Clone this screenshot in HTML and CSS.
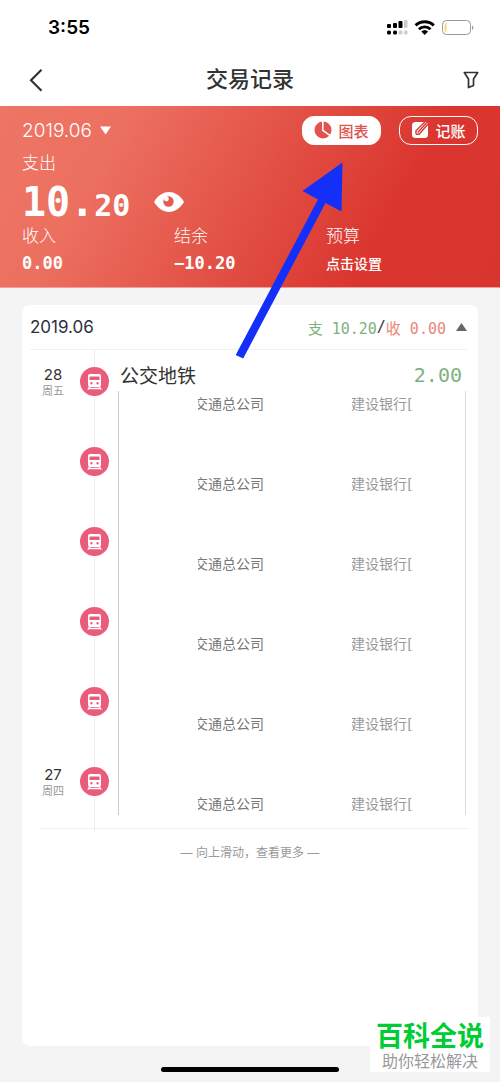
FILE: index.html
```html
<!DOCTYPE html>
<html lang="zh-CN">
<head>
<meta charset="utf-8">
<meta name="viewport" content="width=device-width, initial-scale=1">
<title>交易记录</title>
<link rel="stylesheet" href="styles.css">
</head>
<body>
<svg class="defs" width="0" height="0" aria-hidden="true">
  <symbol id="train" viewBox="0 0 29 29">
    <circle cx="14.500" cy="14.500" r="14.500" fill="#ea5c7b"/>
    <path fill="#fff" fill-rule="evenodd" d="M10 7h9a2 2 0 0 1 2 2v9a2 2 0 0 1-2 2h-9a2 2 0 0 1-2-2V9a2 2 0 0 1 2-2zm.3 2.600a.8.800 0 0 0-.8.800v2.600h10v-2.600a.8.800 0 0 0-.8-.800zM11.500 15a1.200 1.200 0 1 0 0 2.400 1.200 1.200 0 0 0 0-2.400zm6 0a1.200 1.200 0 1 0 0 2.400 1.200 1.200 0 0 0 0-2.400z"/>
    <path stroke="#fff" stroke-width="1.300" fill="none" d="M9.800 19.500 7.800 22.700M19.200 19.500l2 3.200M9 21.500h11"/>
  </symbol>
</svg>
<div class="app">
  <header class="status">
    <span class="clock">3:55</span>
    <svg class="status-icons" width="90" height="18" viewBox="0 0 90 18" aria-hidden="true">
      <g><rect x="1" y="6" width="4" height="4" rx="1"/><rect x="7" y="5" width="4" height="5" rx="1"/><rect x="12.500" y="3" width="4" height="7" rx="1"/><rect x="18" y="2" width="3.500" height="8" rx="1" fill="#ccc"/><rect x="1" y="12.500" width="4" height="4" rx="1.500"/><rect x="7" y="12.500" width="4" height="4" rx="1.500"/><rect x="12.500" y="12.500" width="4" height="4" rx="1.500" fill="#ccc"/><rect x="18" y="12.500" width="3.500" height="4" rx="1.500" fill="#ccc"/></g>
      <g fill="none" stroke="#000" stroke-width="2.900"><path d="M29.600 7.400a13 13 0 0 1 18.200 0"/><path d="M32.900 11.200a8.300 8.300 0 0 1 11.600 0"/></g>
      <path d="M35.300 13.600a5 5 0 0 1 6.800 0L38.700 17z"/>
      <rect x="56.500" y="2.500" width="28" height="14" rx="4" fill="#fff" stroke="#999"/>
      <path d="M60.500 5v9a2 2 0 0 1-2-2V7a2 2 0 0 1 2-2z" fill="#fbd872"/>
      <path d="M86 7.500a2.500 2.500 0 0 1 0 4.500z" fill="#999"/>
    </svg>
  </header>
  <nav class="nav">
    <button class="icon-btn" aria-label="返回"><svg width="14" height="24" viewBox="0 0 14 24"><path d="M12.500 1.800 2 12.300l10.500 10.500" fill="none" stroke="#333" stroke-width="2.200"/></svg></button>
    <h1 class="title">交易记录</h1>
    <button class="icon-btn icon-end" aria-label="筛选"><svg width="16" height="18" viewBox="0 0 16 18"><path d="M1.300 1.500h13.400l-4.200 6.500v6.500l-5 2V8z" fill="none" stroke="#333" stroke-width="1.700" stroke-linejoin="round"/></svg></button>
  </nav>
  <section class="hero">
    <div class="hero-top">
      <button class="month">2019.06 <svg width="11" height="9" viewBox="0 0 11 9"><path d="M0 .5h11L5.500 8.500z" fill="#fff"/></svg></button>
      <div class="actions">
        <button class="pill pill-solid"><svg width="18" height="18" viewBox="0 0 18 18"><circle cx="9" cy="9" r="8.500" fill="#e0534e"/><path d="M8.800 0v9.300l7 5" fill="none" stroke="#fff" stroke-width="1.600"/></svg>图表</button>
        <button class="pill"><svg width="18" height="18" viewBox="0 0 18 18"><rect x="1" y="1" width="16" height="16" rx="3.500" fill="#fff"/><path d="M5 13.200v-3.400L13.800 1M16.800 3.200 8.200 13.200H5M6.800 11.500 15.600 1.800" fill="none" stroke="#db3b33" stroke-width="1.400"/></svg>记账</button>
      </div>
    </div>
    <div class="label">支出</div>
    <div class="total"><span class="whole">10.</span><span class="cents">20</span>
      <button class="eye" aria-label="显示金额"><svg width="30" height="20" viewBox="0 0 30 20"><path d="M0 10C8-3.200 22-3.200 30 10 22 23.200 8 23.200 0 10z" fill="#fff"/><circle cx="14.500" cy="9.500" r="5.200" fill="#e65a50"/><circle cx="12.400" cy="7" r="2.400" fill="#fff"/></svg></button>
    </div>
    <dl class="stats">
      <div><dt class="label">收入</dt><dd class="mono">0.00</dd></div>
      <div><dt class="label">结余</dt><dd class="mono">−10.20</dd></div>
      <div><dt class="label">预算</dt><dd><a class="budget" href="#budget">点击设置</a></dd></div>
    </dl>
  </section>
  <main class="main">
    <section class="card">
      <header class="card-head">
        <h2 class="card-month">2019.06</h2>
        <button class="summary"><span class="out">支 10.20</span>/<span class="in">收 0.00</span><svg width="11" height="8" viewBox="0 0 11 8"><path d="M0 8h11L5.500 0z" fill="#666"/></svg></button>
      </header>
      <ul class="list">
        <li class="row"><div class="date"><b>28</b><small>周五</small></div><svg class="train"><use href="#train"/></svg><div class="body"><div class="line"><span class="name">公交地铁</span><span class="amount">2.00</span></div><div class="meta"><span class="payee">交通总公司</span><span class="bank">建设银行[</span></div></div></li>
        <li class="row"><div class="date"></div><svg class="train"><use href="#train"/></svg><div class="body"><div class="line"></div><div class="meta"><span class="payee">交通总公司</span><span class="bank">建设银行[</span></div></div></li>
        <li class="row"><div class="date"></div><svg class="train"><use href="#train"/></svg><div class="body"><div class="line"></div><div class="meta"><span class="payee">交通总公司</span><span class="bank">建设银行[</span></div></div></li>
        <li class="row"><div class="date"></div><svg class="train"><use href="#train"/></svg><div class="body"><div class="line"></div><div class="meta"><span class="payee">交通总公司</span><span class="bank">建设银行[</span></div></div></li>
        <li class="row"><div class="date"></div><svg class="train"><use href="#train"/></svg><div class="body"><div class="line"></div><div class="meta"><span class="payee">交通总公司</span><span class="bank">建设银行[</span></div></div></li>
        <li class="row"><div class="date"><b>27</b><small>周四</small></div><svg class="train"><use href="#train"/></svg><div class="body"><div class="line"></div><div class="meta"><span class="payee">交通总公司</span><span class="bank">建设银行[</span></div></div></li>
        <li class="frame" aria-hidden="true"></li>
      </ul>
      <p class="more">— 向上滑动，查看更多 —</p>
    </section>
  </main>
  <footer class="home"><span class="home-bar"></span></footer>
  <svg class="arrow" width="108" height="198" viewBox="0 0 108 198" aria-hidden="true"><path d="M107.500.5 67.500 29l15.500 8.500L.7 193l7.500 3.500L90.500 41l16 8.500z" fill="#1430f8"/></svg>
  <aside class="stamp"><strong>百科全说</strong><span>助你轻松解决</span></aside>
</div>
</body>
</html>
```
FILE: styles.css
```css
* { box-sizing: border-box; margin: 0; padding: 0; }
body { font-family: Inter, "Noto Sans CJK SC", sans-serif; color: #333; background: #f4f4f4; }
button { font: inherit; color: inherit; background: none; border: 0; }
svg { display: block; flex: none; }
.defs { position: absolute; }
.app { position: relative; display: flex; flex-direction: column; min-height: 100vh; overflow: hidden; }
.status { display: flex; justify-content: space-between; align-items: center; height: 54px; padding: 0 24px 0 48px; background: #fff; }
.clock { font-size: 19px; font-weight: 600; color: #000; }
.nav { display: grid; grid-template-columns: 50px 1fr 58px; align-items: center; height: 52px; padding: 0 21px 0 29px; background: #fff; }
.title { font-size: 22px; line-height: 28px; padding-bottom: 2px; font-weight: 500; text-align: center; }
.icon-btn { display: flex; }
.icon-end { justify-content: flex-end; }

.hero { padding: 10px 22px 8px; color: #fff; background: linear-gradient(120deg, #ee7564, #ec7060 22%, #da362f 75%, #d8352e); border-bottom: 1px solid #f0a09a; }
.hero-top { display: flex; justify-content: space-between; align-items: center; height: 29px; }
.month { display: flex; align-items: center; gap: 8px; font-size: 19px; font-weight: 300; }
.actions { display: flex; gap: 18px; }
.pill { display: flex; align-items: center; justify-content: center; gap: 6px; width: 79px; height: 29px; padding-bottom: 1px; border: 1px solid #fff; border-radius: 12px; font-size: 15px; font-weight: 500; }
.pill-solid { background: #fff; color: #e0534e; }
.label { font-size: 17px; line-height: 24px; font-weight: 300; margin-top: 6px; }
.mono, .total, .summary, .amount { font-family: "DejaVu Sans Mono", "Noto Sans CJK SC", monospace; }
.total { display: flex; align-items: baseline; height: 43px; line-height: 54px; font-weight: 700; }
.whole { font-size: 40px; }
.cents { font-size: 30px; }
.eye { align-self: flex-end; margin: 0 0 6px 24px; }
.stats { display: grid; grid-template-columns: repeat(3, 1fr); }
.stats dd { font-size: 17px; line-height: 31px; font-weight: 700; }
.budget { display: block; color: #fff; font-size: 14px; font-weight: 500; text-decoration: none; }

.main { flex: 1; display: flex; padding: 17px 22px 0; }
.card { flex: 1; min-width: 0; background: #fff; border-radius: 8px; }
.card-head { display: flex; justify-content: space-between; align-items: center; height: 45px; margin: 0 11px 0 8px; border-bottom: 1px solid #f1f1f1; }
.card-month { font-size: 17px; font-weight: 400; color: #2b3040; }
.summary { display: flex; align-items: center; font-size: 15px; }
.summary svg { margin-left: 10px; }
.out, .amount { color: #7db27e; }
.in { color: #ec8678; }
.list { position: relative; list-style: none; margin: 0 10px 0 18px; border-bottom: 1px solid #f1f1f1; }
.list::before { content: ""; position: absolute; left: 54px; top: 0; bottom: -4px; width: 1px; background: #eee; }
.row { position: relative; display: flex; height: 80px; padding-top: 13px; }
.row:nth-child(6) { height: 78px; }
.date { width: 26px; margin-right: 14px; display: flex; flex-direction: column; align-items: center; }
.date b { margin-top: 3px; font-size: 15px; line-height: 18px; font-weight: 400; }
.date small { font-size: 11px; line-height: 14px; color: #999; white-space: nowrap; }
.train { width: 29px; height: 29px; margin-top: 4px; }
.body { flex: 1; min-width: 0; margin-left: 11px; }
.line { display: flex; justify-content: space-between; align-items: flex-start; height: 26px; padding-right: 6px; }
.name { font-size: 19px; line-height: 28px; }
.amount { font-size: 20px; line-height: 24px; }
.meta { display: flex; gap: 87px; padding: 5px 0 0 78px; font-size: 14px; line-height: 20px; white-space: nowrap; }
.payee { display: flex; justify-content: flex-end; width: 66px; overflow: hidden; color: #777; }
.bank { color: #999; }
.frame { position: absolute; left: 78px; right: 2px; top: 41px; bottom: 13px; border: solid #ccc; border-width: 0 1px; border-right-color: #ddd; }
.more { margin-top: 14px; font-size: 12px; line-height: 20px; text-align: center; color: #999; }

.home { display: flex; justify-content: center; align-items: center; height: 36px; padding-top: 10px; }
.home-bar { width: 178px; height: 5px; border-radius: 3px; background: #000; }
.arrow { position: absolute; left: 235px; top: 162px; }
.stamp { position: absolute; right: 10px; bottom: 10px; width: 120px; height: 55px; display: flex; flex-direction: column; align-items: center; background: #fff; }
.stamp strong { font-size: 27px; line-height: 36px; padding-top: 2px; font-weight: 700; color: #0c3; }
.stamp span { font-size: 16px; line-height: 12px; color: #999; }
```
